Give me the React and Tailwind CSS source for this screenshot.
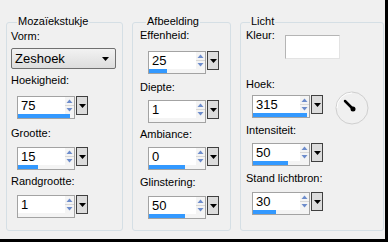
import React from 'react';

// small up/down arrows of the spin box
const SpinArrows = () => (
  <svg width="9" height="17" viewBox="0 0 9 17" className="block">
    <rect x="0" y="0" width="9" height="17" fill="#f4f4f4" />
    <line x1="0" y1="8.5" x2="9" y2="8.5" stroke="#d8d8d8" />
    <polygon points="1.5,6 7.5,6 4.5,2.5" fill="#6d8ccb" />
    <polygon points="1.5,11 7.5,11 4.5,14.5" fill="#6d8ccb" />
  </svg>
);

const Spin = ({ value, bar, className = '' }) => (
  <div className={`flex items-start w-[71px] ${className}`}>
    <div className="w-[58px] border border-[#a3a3a3] bg-white flex flex-col">
      <div className="flex h-[17px]">
        <span className="flex-1 pl-[3px] leading-[17px] text-[13px]">{value}</span>
        <SpinArrows />
      </div>
      <div className="h-[4px] bg-[#f4f4f4]">
        <div className="h-[4px] bg-[#3399ff]" style={{ width: bar }} />
      </div>
    </div>
    <div className="ml-px w-[12px] h-[19px] border border-[#404040] bg-[#dcdcdc] flex items-center justify-center">
      <svg width="7" height="4" viewBox="0 0 7 4">
        <polygon points="0,0 7,0 3.5,4" fill="#000" />
      </svg>
    </div>
  </div>
);

const Label = ({ children, className = '' }) => (
  <div className={`h-[13px] leading-[13px] whitespace-nowrap ${className}`}>{children}</div>
);

const Group = ({ title, titleOffset, className = '', children }) => (
  <div className={`mt-[22px] h-[209px] border border-[#d5dfe5] rounded-[3px] ${className}`}>
    <div className={`-mt-[8px] w-fit px-[1px] bg-[#f0f0f0] leading-[13px] ${titleOffset}`}>{title}</div>
    {children}
  </div>
);

const Dial = () => (
  <svg width="36" height="36" viewBox="0 0 36 36" className="block">
    <circle cx="18" cy="18" r="16" fill="#f0f0f0" stroke="#cfcfcf" />
    <path d="M3 18 A15 15 0 0 1 18 3" stroke="#ffffff" fill="none" />
    <line x1="11" y1="11" x2="19" y2="19" stroke="#000" strokeWidth="2.5" strokeLinecap="round" />
    <circle cx="19" cy="19" r="2.5" fill="#000" />
  </svg>
);

export default function App() {
  return (
    <div
      className="w-[388px] h-[242px] bg-[#f0f0f0] text-black text-[11px] border-r-[3px] border-b-[3px] border-black overflow-hidden flex items-start"
      style={{ fontFamily: '"Liberation Sans", Arial, sans-serif' }}
    >
      {/* Mozaïekstukje */}
      <Group title="Mozaïekstukje" titleOffset="ml-[6px]" className="ml-[6px] w-[117px] pl-[4px]">
        <Label className="mt-[2px]">Vorm:</Label>
        <div className="mt-[5px] w-[105px] h-[21px] border border-[#707070] rounded-[2px] bg-gradient-to-b from-[#f2f2f2] to-[#dddddd] flex items-center justify-between pl-[3px] pr-[6px]">
          <span className="text-[13px]">Zeshoek</span>
          <svg width="7" height="4" viewBox="0 0 7 4">
            <polygon points="0,0 7,0 3.5,4" fill="#000" />
          </svg>
        </div>
        <Label className="mt-[5px]">Hoekigheid:</Label>
        <Spin value="75" bar={52} className="mt-[9px] ml-[6px]" />
        <Label className="mt-[8px]">Grootte:</Label>
        <Spin value="15" bar={20} className="mt-[7px] ml-[6px]" />
        <Label className="mt-[5px]">Randgrootte:</Label>
        <Spin value="1" bar={0} className="mt-[7px] ml-[6px]" />
      </Group>

      {/* Afbeelding */}
      <Group title="Afbeelding" titleOffset="ml-[6px]" className="ml-[9px] w-[99px] pl-[7px]">
        <Label className="mt-[1px]">Effenheid:</Label>
        <Spin value="25" bar={18} className="mt-[9px] ml-[8px]" />
        <Label className="mt-[7px]">Diepte:</Label>
        <Spin value="1" bar={0} className="mt-[6px] ml-[8px]" />
        <Label className="mt-[5px]">Ambiance:</Label>
        <Spin value="0" bar={36} className="mt-[6px] ml-[8px]" />
        <Label className="mt-[6px]">Glinstering:</Label>
        <Spin value="50" bar={36} className="mt-[7px] ml-[8px]" />
      </Group>

      {/* Licht */}
      <Group title="Licht" titleOffset="ml-[4px]" className="ml-[9px] w-[144px] pl-[5px]">
        <div className="flex items-start">
          <Label className="mt-[1px]">Kleur:</Label>
          <div className="ml-[10px] mt-[7px] w-[55px] h-[24px] bg-white border border-[#b5b5b5] border-r-[#e3e3e3] border-b-[#e3e3e3]" />
        </div>
        <Label className="mt-[19px]">Hoek:</Label>
        <div className="flex items-start h-[33px]">
          <Spin value="315" bar={54} className="mt-[4px] ml-[6px]" />
          <div className="ml-[11px] -mt-[1px]">
            <Dial />
          </div>
        </div>
        <Label>Intensiteit:</Label>
        <Spin value="50" bar={35} className="mt-[6px] ml-[6px]" />
        <Label className="mt-[6px]">Stand lichtbron:</Label>
        <Spin value="30" bar={23} className="mt-[7px] ml-[6px]" />
      </Group>
    </div>
  );
}
